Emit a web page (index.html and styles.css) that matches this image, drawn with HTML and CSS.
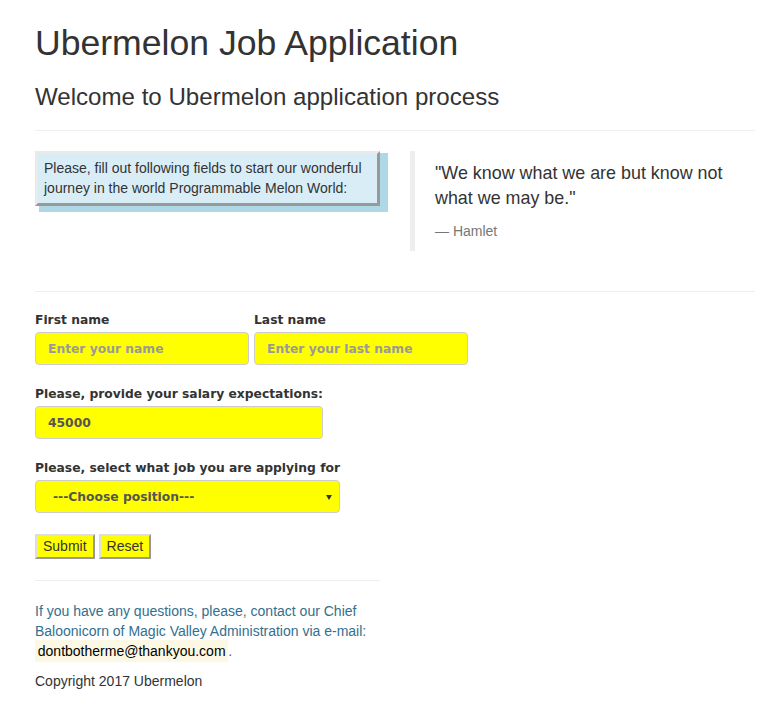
FILE: index.html
```html
<!DOCTYPE html>
<html lang="en">
<head>
<meta charset="utf-8">
<title>Ubermelon Job Application</title>
<link rel="stylesheet" href="styles.css">
</head>
<body>
<div class="container">
  <h1 class="title">Ubermelon Job Application</h1>
  <h3 class="subtitle">Welcome to Ubermelon application process</h3>
  <hr class="rule">
  <div class="intro-row">
    <div class="col">
      <p class="intro-box">Please, fill out following fields to start our wonderful journey in the world Programmable Melon World:</p>
    </div>
    <div class="col">
      <blockquote class="quote">
        <p class="quote-text">"We know what we are but know not what we may be."</p>
        <footer class="quote-author">Hamlet</footer>
      </blockquote>
    </div>
  </div>
  <hr class="rule">
  <form class="app-form">
    <div class="name-row">
      <div class="field">
        <label class="field-label" for="fname">First name</label>
        <input class="field-input name-input" id="fname" type="text" placeholder="Enter your name">
      </div>
      <div class="field">
        <label class="field-label" for="lname">Last name</label>
        <input class="field-input name-input" id="lname" type="text" placeholder="Enter your last name">
      </div>
    </div>
    <div class="field fit">
      <label class="field-label" for="salary">Please, provide your salary expectations:</label>
      <input class="field-input" id="salary" type="text" value="45000">
    </div>
    <div class="field fit">
      <label class="field-label" for="job">Please, select what job you are applying for</label>
      <span class="select-wrap">
        <select class="field-input field-select" id="job">
          <option>---Choose position---</option>
        </select>
      </span>
    </div>
    <div class="buttons">
      <button class="btn" type="submit">Submit</button>
      <button class="btn" type="reset">Reset</button>
    </div>
  </form>
  <div class="half">
    <hr class="rule rule-bottom">
    <p class="contact">If you have any questions, please, contact our Chief Baloonicorn of Magic Valley Administration via e-mail: <mark class="email">dontbotherme@thankyou.com</mark>.</p>
    <p class="copyright">Copyright 2017 Ubermelon</p>
  </div>
</div>
</body>
</html>
```

FILE: styles.css
```css
* {
  box-sizing: border-box;
}

html, body {
  margin: 0;
  padding: 0;
  background: #fff;
}

body {
  font-family: "Liberation Sans", Arial, sans-serif;
  font-size: 14px;
  line-height: 20px;
  color: #333;
}

.container {
  width: 772px;
  padding: 0 17px 0 35px;
}

.title {
  font-size: 35.6px;
  font-weight: 400;
  line-height: 39.6px;
  margin: 24px 0 10px;
}

.subtitle {
  font-size: 24.1px;
  font-weight: 400;
  line-height: 26.4px;
  margin: 20px 0 10px;
}

.rule {
  margin: 20px 0;
  border: 0;
  border-top: 1px solid #eee;
  height: 0;
}

.intro-row {
  display: grid;
  grid-template-columns: 345px 345px;
  column-gap: 30px;
}

.intro-box {
  margin: 0;
  font-size: 14px;
  line-height: 20px;
  background: #d9edf7;
  padding: 4px 5px 5px 6px;
  border: 3px solid;
  border-color: #eaeaea #999 #999 #eaeaea;
  box-shadow: 6px 4px 0 2px #add8e6;
}

.quote {
  margin: 0 0 20px;
  padding: 10px 20px;
  border-left: 5px solid #eee;
}

.quote-text {
  margin: 0 0 10px;
  font-size: 17.9px;
  line-height: 25px;
}

.quote-author {
  font-size: 14px;
  line-height: 20px;
  color: #777;
}

.quote-author::before {
  content: "\2014 \00A0";
}

.app-form {
  font-family: "DejaVu Sans", Verdana, sans-serif;
  font-size: 12.3px;
}

.name-row {
  display: flex;
  gap: 5px;
}

.field {
  margin-bottom: 21px;
}

.field.fit {
  display: block;
  width: max-content;
}

.field-label {
  display: block;
  font-weight: 700;
  line-height: 17px;
  margin-bottom: 3px;
  color: #333;
}

.field-input {
  display: block;
  width: 100%;
  height: 33px;
  padding: 6px 12px;
  font-family: "DejaVu Sans", Verdana, sans-serif;
  font-size: 12.3px;
  font-weight: 700;
  color: #555;
  background: #ff0;
  border: 1px solid #ccc;
  border-radius: 4px;
  outline: none;
}

.name-input {
  width: 214px;
}

.field-input::placeholder {
  color: #999;
  opacity: 1;
}

.select-wrap {
  position: relative;
  display: block;
}

.field-select {
  appearance: none;
  -webkit-appearance: none;
  padding-left: 17px;
}

.select-wrap::after {
  content: "";
  position: absolute;
  right: 8px;
  top: 15px;
  border-left: 3px solid transparent;
  border-right: 3px solid transparent;
  border-top: 5px solid #333;
  pointer-events: none;
}

.buttons {
  display: flex;
  gap: 4px;
}

.btn {
  font-family: "Liberation Sans", Arial, sans-serif;
  font-size: 14px;
  line-height: 21px;
  height: 25px;
  padding: 0 6px;
  color: #333;
  background: #ff0;
  border: 2px solid;
  border-color: #ddd #999 #999 #ddd;
  border-radius: 0;
}

.half {
  width: 345px;
}

.rule-bottom {
  margin-top: 21px;
}

.contact {
  margin: 0 0 10px;
  color: #31708f;
}

.email {
  background: #fcf8e3;
  color: #000;
  padding: 0.2em;
}

.copyright {
  margin: 0 0 10px;
}
```
